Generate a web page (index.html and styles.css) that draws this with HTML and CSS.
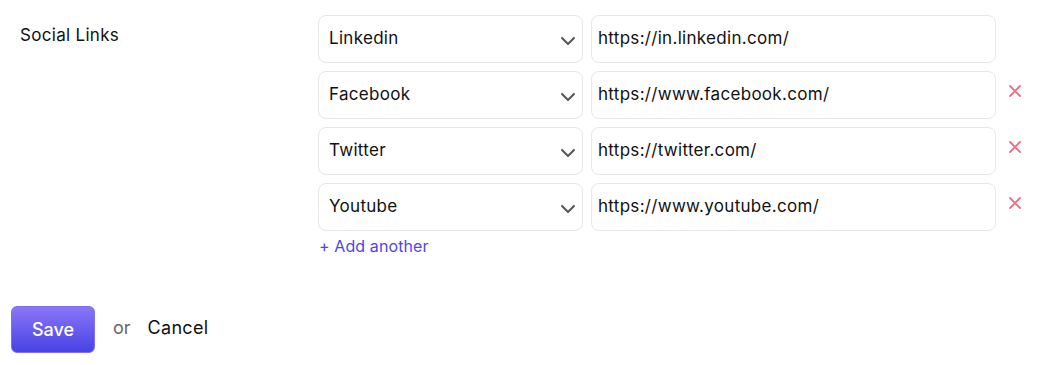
FILE: index.html
```html
<!DOCTYPE html>
<html lang="en">
<head>
    <meta charset="UTF-8">
    <meta name="viewport" content="width=device-width, initial-scale=1.0">
    <title>Social Links</title>
    <link rel="stylesheet" href="styles.css">
</head>
<body>
    <form class="settings-form">
        <div class="field-row">
            <div class="field-label">Social Links</div>

            <div class="field-body">
                <div class="link-row">
                    <div class="select-box">
                        <span>Linkedin</span>
                        <svg class="chevron" width="16" height="10" viewBox="0 0 16 10"><path d="M2 2l6 6 6-6" fill="none" stroke="#555" stroke-width="2" stroke-linecap="round" stroke-linejoin="round"/></svg>
                    </div>
                    <div class="text-box">https://in.linkedin.com/</div>
                    <span class="remove-slot"></span>
                </div>

                <div class="link-row">
                    <div class="select-box">
                        <span>Facebook</span>
                        <svg class="chevron" width="16" height="10" viewBox="0 0 16 10"><path d="M2 2l6 6 6-6" fill="none" stroke="#555" stroke-width="2" stroke-linecap="round" stroke-linejoin="round"/></svg>
                    </div>
                    <div class="text-box">https://www.facebook.com/</div>
                    <span class="remove-slot">
                        <svg width="12" height="12" viewBox="0 0 12 12"><path d="M1 1l10 10M11 1L1 11" stroke="#f26b83" stroke-width="1.8" stroke-linecap="round"/></svg>
                    </span>
                </div>

                <div class="link-row">
                    <div class="select-box">
                        <span>Twitter</span>
                        <svg class="chevron" width="16" height="10" viewBox="0 0 16 10"><path d="M2 2l6 6 6-6" fill="none" stroke="#555" stroke-width="2" stroke-linecap="round" stroke-linejoin="round"/></svg>
                    </div>
                    <div class="text-box">https://twitter.com/</div>
                    <span class="remove-slot">
                        <svg width="12" height="12" viewBox="0 0 12 12"><path d="M1 1l10 10M11 1L1 11" stroke="#f26b83" stroke-width="1.8" stroke-linecap="round"/></svg>
                    </span>
                </div>

                <div class="link-row">
                    <div class="select-box">
                        <span>Youtube</span>
                        <svg class="chevron" width="16" height="10" viewBox="0 0 16 10"><path d="M2 2l6 6 6-6" fill="none" stroke="#555" stroke-width="2" stroke-linecap="round" stroke-linejoin="round"/></svg>
                    </div>
                    <div class="text-box">https://www.youtube.com/</div>
                    <span class="remove-slot">
                        <svg width="12" height="12" viewBox="0 0 12 12"><path d="M1 1l10 10M11 1L1 11" stroke="#f26b83" stroke-width="1.8" stroke-linecap="round"/></svg>
                    </span>
                </div>

                <a href="#" class="add-link">+ Add another</a>
            </div>
        </div>

        <div class="form-actions">
            <button type="button" class="btn">Save</button>
            <span class="or">or</span>
            <a href="#" class="cancel">Cancel</a>
        </div>
    </form>
</body>
</html>
```

FILE: styles.css
```css
body {
    font-family: Inter, "Noto Sans", sans-serif;
    background-color: #ffffff;
    color: #111111;
    margin: 0;
    padding: 0;
}
.settings-form {
    padding: 15px 0 0 11px;
}
.field-row {
    display: flex;
}
.field-label {
    width: 307px;
    padding: 10px 0 0 9px;
    box-sizing: border-box;
    font-size: 17px;
    letter-spacing: 0.3px;
}
.field-body {
    display: flex;
    flex-direction: column;
    gap: 8px;
}
.link-row {
    display: flex;
    gap: 8px;
    align-items: center;
}
.select-box {
    width: 265px;
    height: 48px;
    box-sizing: border-box;
    border: 1px solid #e5e7eb;
    border-radius: 8px;
    display: flex;
    align-items: center;
    justify-content: space-between;
    padding: 0 6px 0 10px;
    font-size: 17px;
    letter-spacing: 0.3px;
}
.select-box span {
    margin-top: -3px;
}
.chevron {
    margin-top: 3px;
}
.text-box {
    width: 405px;
    height: 48px;
    box-sizing: border-box;
    border: 1px solid #e5e7eb;
    border-radius: 8px;
    display: flex;
    align-items: center;
    padding: 0 0 3px 6px;
    font-size: 17px;
    letter-spacing: 0.3px;
}
.remove-slot {
    width: 22px;
    display: flex;
    justify-content: center;
    margin-top: -8px;
}
.add-link {
    color: #4f46e5;
    text-decoration: none;
    font-size: 16px;
    letter-spacing: 0.1px;
    margin-top: -3px;
    padding-left: 1px;
}
.form-actions {
    display: flex;
    align-items: center;
    margin-top: 50px;
}
.btn {
    width: 84px;
    height: 47px;
    border: 1px solid #7c6ff3;
    border-radius: 6px;
    background: linear-gradient(to bottom, #8a76f6, #4842e6);
    color: white;
    font-family: inherit;
    font-size: 18px;
    font-weight: 500;
    cursor: pointer;
}
.or {
    color: #666;
    font-size: 18px;
    margin: -4px 0 0 18px;
}
.cancel {
    color: #111;
    text-decoration: none;
    font-size: 18px;
    letter-spacing: 0.3px;
    margin: -4px 0 0 17px;
}
```
